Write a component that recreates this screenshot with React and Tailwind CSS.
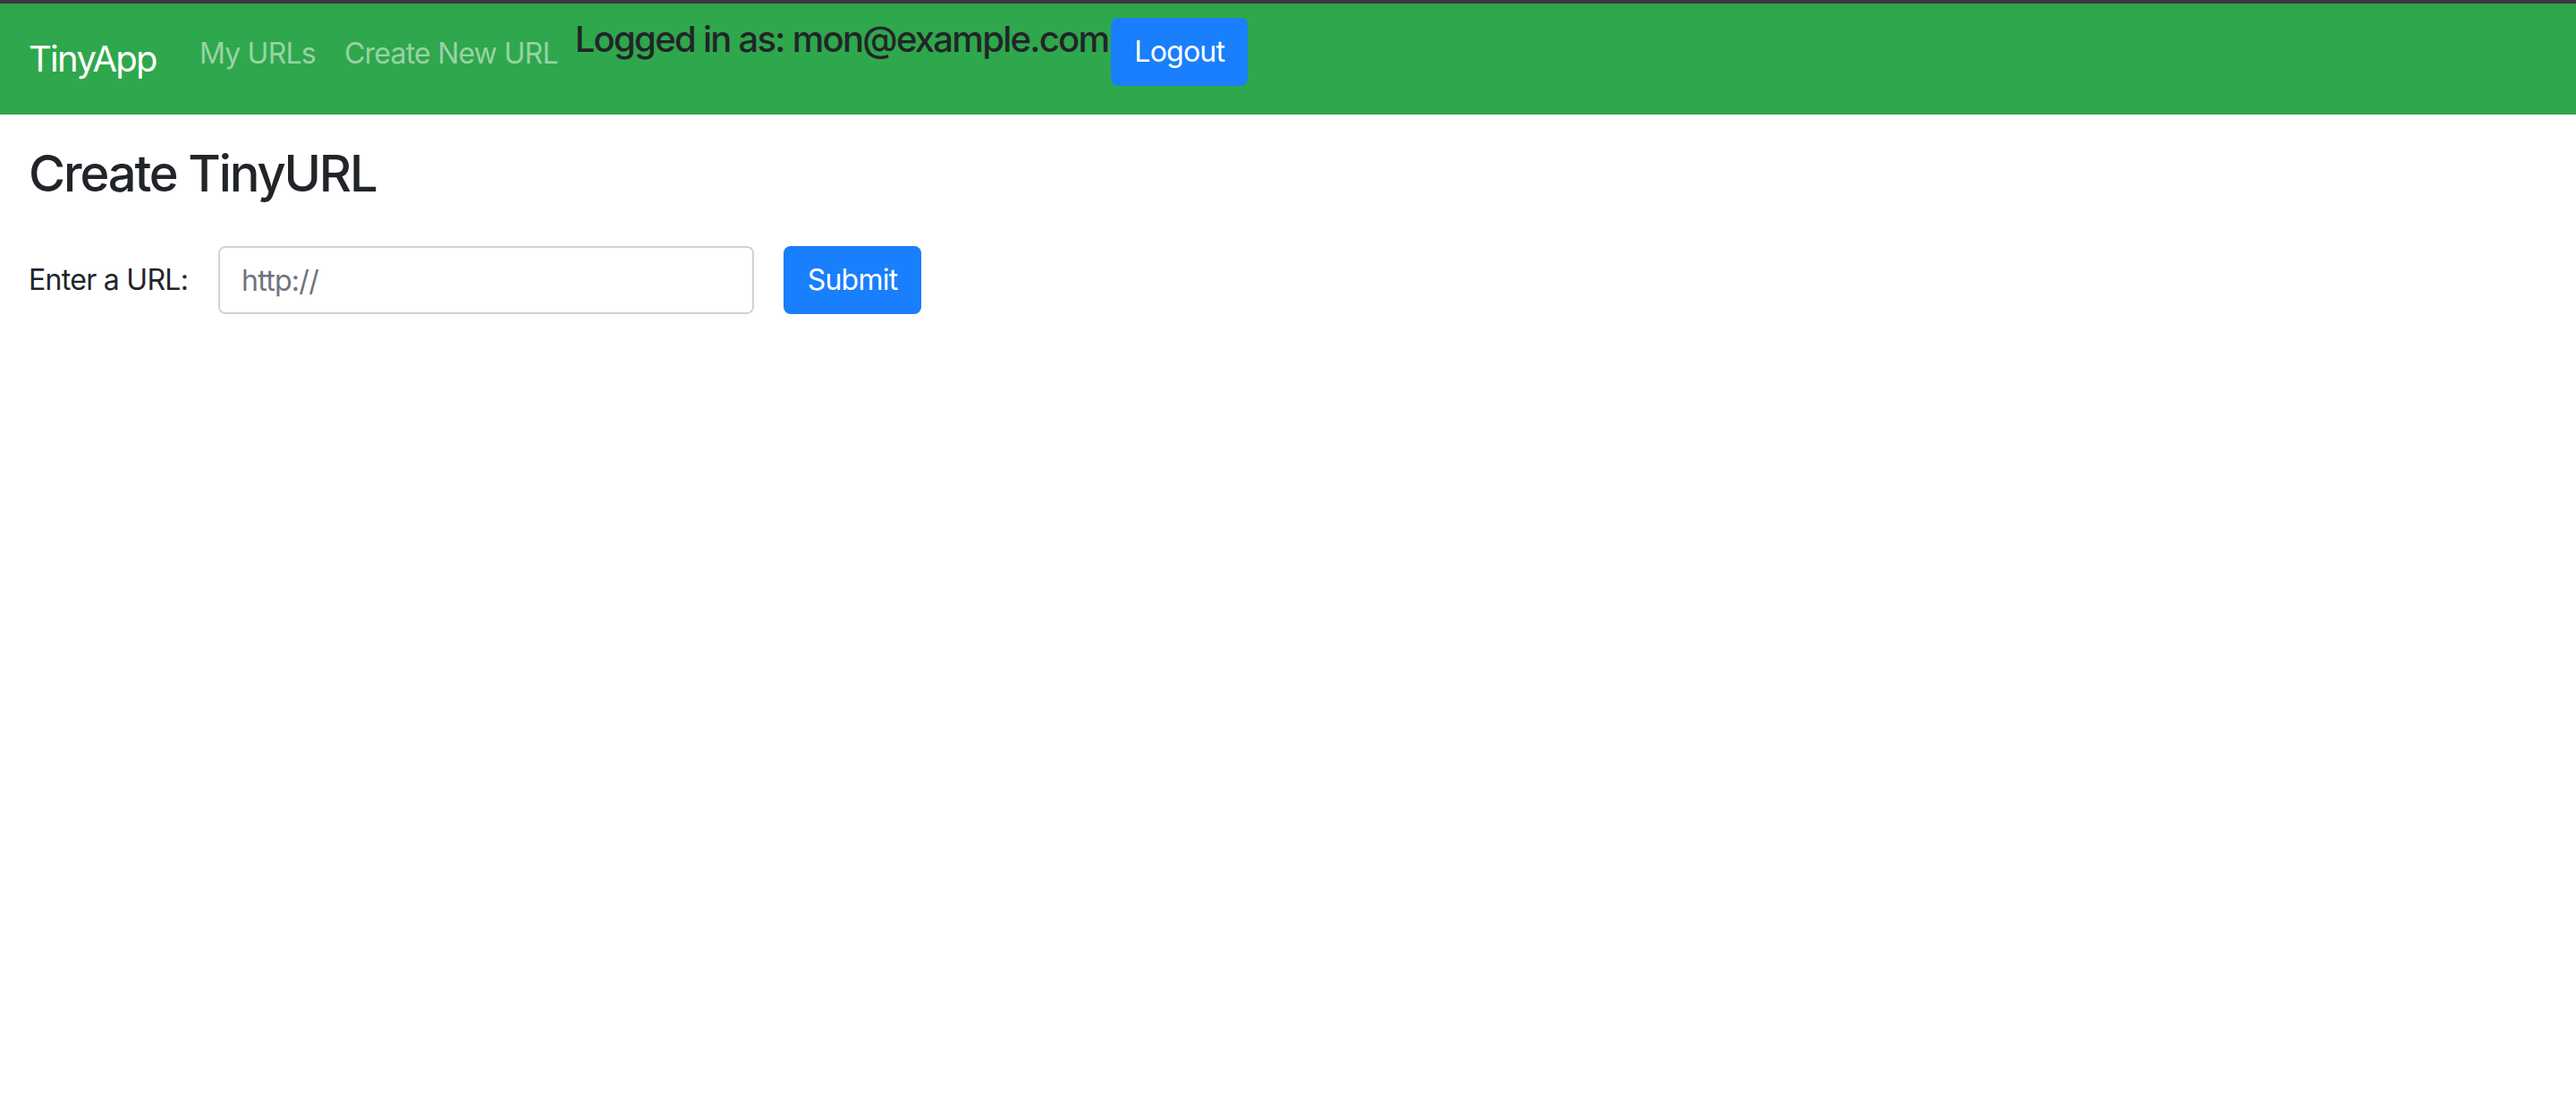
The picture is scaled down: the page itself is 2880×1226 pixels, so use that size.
export default function App() {
  const font = { fontFamily: 'Inter, "Noto Sans", sans-serif' };
  return (
    <div className="min-h-screen bg-white text-[#212529]" style={font}>
      <div className="h-[4px] bg-[#3a3b3f]" />
      <nav className="flex h-[124px] items-start bg-[#2fa74c] pl-[32px] pt-[16px]">
        <a className="mr-[32px] mt-[16px] text-[40px] leading-[60px] tracking-[-0.043em] text-white">TinyApp</a>
        <ul className="flex">
          <li>
            <a className="block px-[16px] py-[16px] text-[32px] leading-[48px] tracking-[-0.024em] text-[#97d3a5]">My URLs</a>
          </li>
          <li>
            <a className="block px-[16px] py-[16px] text-[32px] leading-[48px] tracking-[-0.024em] text-[#97d3a5]">Create New URL</a>
          </li>
        </ul>
        <h5 className="ml-[3px] text-[40px] font-medium leading-[48px] tracking-[-0.043em] text-[#212529]">Logged in as: mon@example.com</h5>
        <button className="ml-[3px] h-[76px] rounded-[8px] border-2 border-[#197ffc] bg-[#197ffc] px-[24px] text-[32px] leading-[48px] tracking-[-0.024em] text-white">
          Logout
        </button>
      </nav>
      <main className="px-[32px]">
        <h3 className="mt-[33px] text-[56px] font-medium leading-[67px] tracking-[-0.038em]">Create TinyURL</h3>
        <form className="mt-[47px] flex items-center">
          <label className="w-[212px] text-[32px] leading-[48px] tracking-[-0.022em]">Enter a URL:</label>
          <input
            type="text"
            placeholder="http://"
            className="h-[76px] w-[599px] rounded-[8px] border-2 border-[#ced4da] px-[24px] text-[32px] tracking-[-0.022em] text-[#495057] placeholder:text-[#6c757d] outline-none"
          />
          <button
            type="button"
            className="ml-[33px] h-[76px] w-[154px] rounded-[8px] bg-[#197ffc] text-[32px] leading-[48px] tracking-[-0.024em] text-white"
          >
            Submit
          </button>
        </form>
      </main>
    </div>
  );
}
